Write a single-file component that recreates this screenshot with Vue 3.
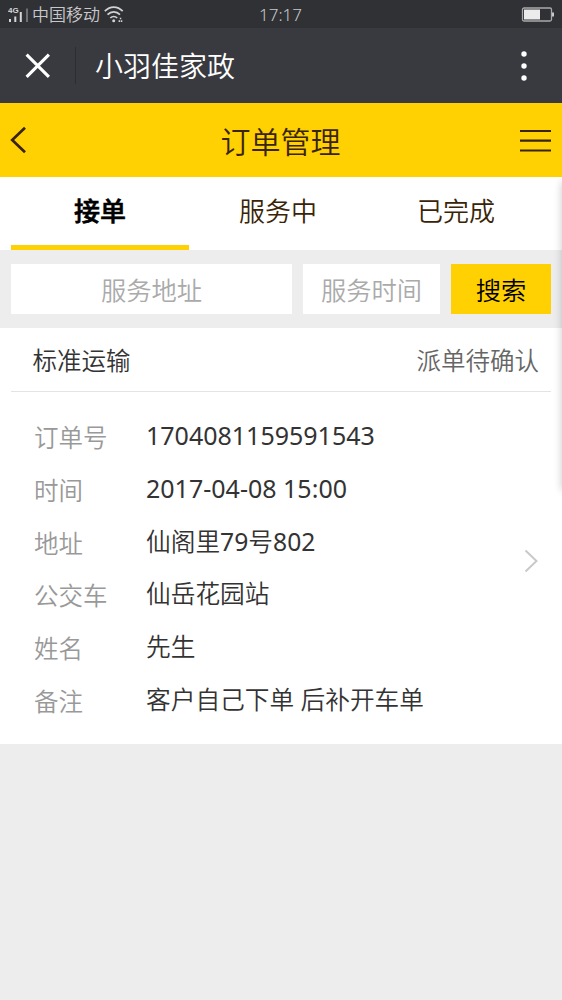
<script setup>
const tabs = ['接单', '服务中', '已完成']
const rows = [
  { label: '订单号', value: '1704081159591543', kind: 'number' },
  { label: '时间', value: '2017-04-08 15:00', kind: 'date' },
  { label: '地址', value: '仙阁里79号802', kind: 'text' },
  { label: '公交车', value: '仙岳花园站', kind: 'text' },
  { label: '姓名', value: '先生', kind: 'text' },
  { label: '备注', value: '客户自己下单 后补开车单', kind: 'text' },
]
// Digits are set one step heavier than the Chinese text around them.
const split = (s) => s.split(/(\d+)/).filter(Boolean)
const isDigits = (s) => /^\d+$/.test(s)
</script>

<template>
  <div class="screen">
    <div class="status">
      <svg class="signal" width="22" height="18" viewBox="0 0 22 18">
        <text x="0" y="6.600" class="net">4G</text>
        <path d="M2 13v3M7.300 10.500V16M12.800 6v10" stroke="#d6d6d8" stroke-width="2" />
        <path d="M19 2.500V16" stroke="#77787b" stroke-width="1.800" />
      </svg>
      <span class="carrier">中国移动</span>
      <svg class="wifi" width="20" height="17" viewBox="0 0 20 17" fill="none" stroke="#d2d2d4" stroke-width="1.700">
        <path d="M.8 5.200C6-.2 13.500-.2 18.700 5.200M3.500 8.700c3.600-3.700 8.900-3.700 12.500 0M6.300 12c2-2 4.900-2 6.900 0" />
        <circle cx="9.700" cy="14.700" r="1.500" fill="#d2d2d4" stroke="none" />
        <path d="M15.800 12.500h2M14.600 15.200h3.800" stroke-dasharray="1.500 .7" />
      </svg>
      <span class="clock">17:17</span>
      <svg class="battery" width="33" height="15" viewBox="0 0 33 15">
        <rect x="1.500" y="1" width="29" height="13" rx="1.500" fill="none" stroke="#a9a9ab" stroke-width="1.300" />
        <rect x="3" y="2.500" width="16" height="10" fill="#ececec" />
        <rect x="31" y="5.500" width="2" height="4" fill="#c8c8c8" />
      </svg>
    </div>

    <div class="titlebar">
      <svg class="close" width="26" height="26" viewBox="0 0 26 26">
        <path d="M1.600 1.600l22.300 22.300M23.900 1.600L1.600 23.900" stroke="#fff" stroke-width="3.100" />
      </svg>
      <span class="divider"></span>
      <span class="appname">小羽佳家政</span>
      <svg class="more" width="6" height="30" viewBox="0 0 6 30" fill="#fff">
        <circle cx="3" cy="3" r="2.700" /><circle cx="3" cy="15" r="2.700" /><circle cx="3" cy="27" r="2.700" />
      </svg>
    </div>

    <div class="navbar">
      <svg class="back" width="17" height="28" viewBox="0 0 17 28" fill="none">
        <path d="M16 1.700L3.200 14L16 26.300" stroke="#3a2408" stroke-width="2.700" />
      </svg>
      <span class="heading">订单管理</span>
      <svg class="menu" width="31" height="24" viewBox="0 0 31 24">
        <path d="M0 3h31M0 12.700h31M0 22.500h31" stroke="#3a2408" stroke-width="2.200" />
      </svg>
    </div>

    <div class="tabs">
      <div v-for="(t, i) in tabs" :key="t" class="tab" :class="{ active: i === 0 }">{{ t }}</div>
    </div>

    <div class="search">
      <div class="field address">服务地址</div>
      <div class="field time">服务时间</div>
      <div class="button">搜索</div>
    </div>

    <div class="card">
      <div class="cardhead">
        <span>标准运输</span>
        <span class="state">派单待确认</span>
      </div>
      <div class="details">
        <div class="list">
          <div v-for="r in rows" :key="r.label" class="row">
            <span class="label">{{ r.label }}</span>
            <span class="value" :class="r.kind"><span v-for="(p, k) in split(r.value)" :key="k" :class="{ digits: isDigits(p) }">{{ p }}</span></span>
          </div>
        </div>
        <svg class="arrow" width="15" height="24" viewBox="0 0 15 24" fill="none">
          <path d="M1.500 1.500L12.500 12L1.500 22.500" stroke="#c9c9c9" stroke-width="2" />
        </svg>
      </div>
    </div>
    <div class="edge"></div>
  </div>
</template>

<style>
body {
  background: #ededed;
}
</style>

<style scoped>
.screen {
  position: relative;
  width: 562px;
  height: 1000px;
  overflow: hidden;
  background: #ededed;
  font-family: "Noto Sans", "Noto Sans CJK SC", sans-serif;
  font-weight: 350;
  white-space: nowrap;
}
.status {
  display: flex;
  align-items: center;
  box-sizing: border-box;
  height: 28px;
  padding: 0 8px;
  background: #303135;
  color: #c8c8ca;
  font-size: 17px;
  line-height: 30px;
}
.signal { margin-top: 2px; }
.net {
  font: bold 8px "Liberation Sans", sans-serif;
  fill: #d6d6d8;
}
.carrier { margin-left: 2px; width: 69px; padding-top: 2px; }
.wifi { margin-left: 3px; }
.clock { margin-left: 135px; padding-top: 2px; }
.battery { margin-left: auto; }
.titlebar {
  display: flex;
  align-items: center;
  height: 75px;
  background: #393a3f;
  color: #fff;
}
.close { margin-left: 25px; }
.divider { width: 1px; height: 37px; margin-left: 24px; background: #2c2d31; }
.appname { margin-left: 19px; font-size: 28px; line-height: 75px; padding-top: 2px; }
.more { margin-left: auto; margin-right: 35px; }
.navbar {
  display: flex;
  align-items: center;
  justify-content: space-between;
  box-sizing: border-box;
  height: 74px;
  padding: 0 11px 0 9px;
  background: #ffd103;
  color: #3a2408;
}
.heading { font-size: 30px; line-height: 74px; margin-left: 15px; padding-top: 3px; }
.tabs {
  display: flex;
  height: 73px;
  padding: 0 11px;
  background: #fff;
}
.tab {
  box-sizing: border-box;
  width: 178px;
  height: 73px;
  flex: none;
  text-align: center;
  font-size: 26px;
  line-height: 69px;
  color: #3a2408;
}
.tab.active {
  font-weight: 500;
  -webkit-text-stroke: .6px #000;
  color: #000;
  border-bottom: 5px solid #ffd103;
}
.search {
  display: flex;
  gap: 11px;
  padding: 14px 11px;
  height: 50px;
  font-size: 25.300px;
  line-height: 52px;
  text-align: center;
}
.field { background: #fff; color: #aaa; }
.address { width: 281px; }
.time { width: 137px; }
.button { width: 100px; background: #ffd103; color: #000; }
.card { height: 416px; background: #fff; color: #333; font-size: 24.500px; }
.cardhead {
  display: flex;
  justify-content: space-between;
  height: 63px;
  margin: 0 11px;
  padding: 0 12px 0 21.500px;
  border-bottom: 1px solid #e3e3e3;
  line-height: 66px;
}
.state { color: #666; }
.details { display: flex; justify-content: space-between; padding: 20.300px 23px 0 34px; }
.row { display: flex; height: 52.700px; line-height: 52.700px; }
.label { width: 112px; color: #999; }
.value { margin-top: -2px; }
.text { font-size: 24.700px; }
.digits, .number, .date { font-weight: 400; }
.number, .date { font-size: 25px; margin-top: -3px; }
.arrow { margin-top: 136.700px; }
.edge {
  position: absolute;
  top: 182px;
  left: 562px;
  width: 20px;
  height: 308px;
  box-shadow: 0 0 9px rgba(0, 0, 0, .22);
}
</style>
